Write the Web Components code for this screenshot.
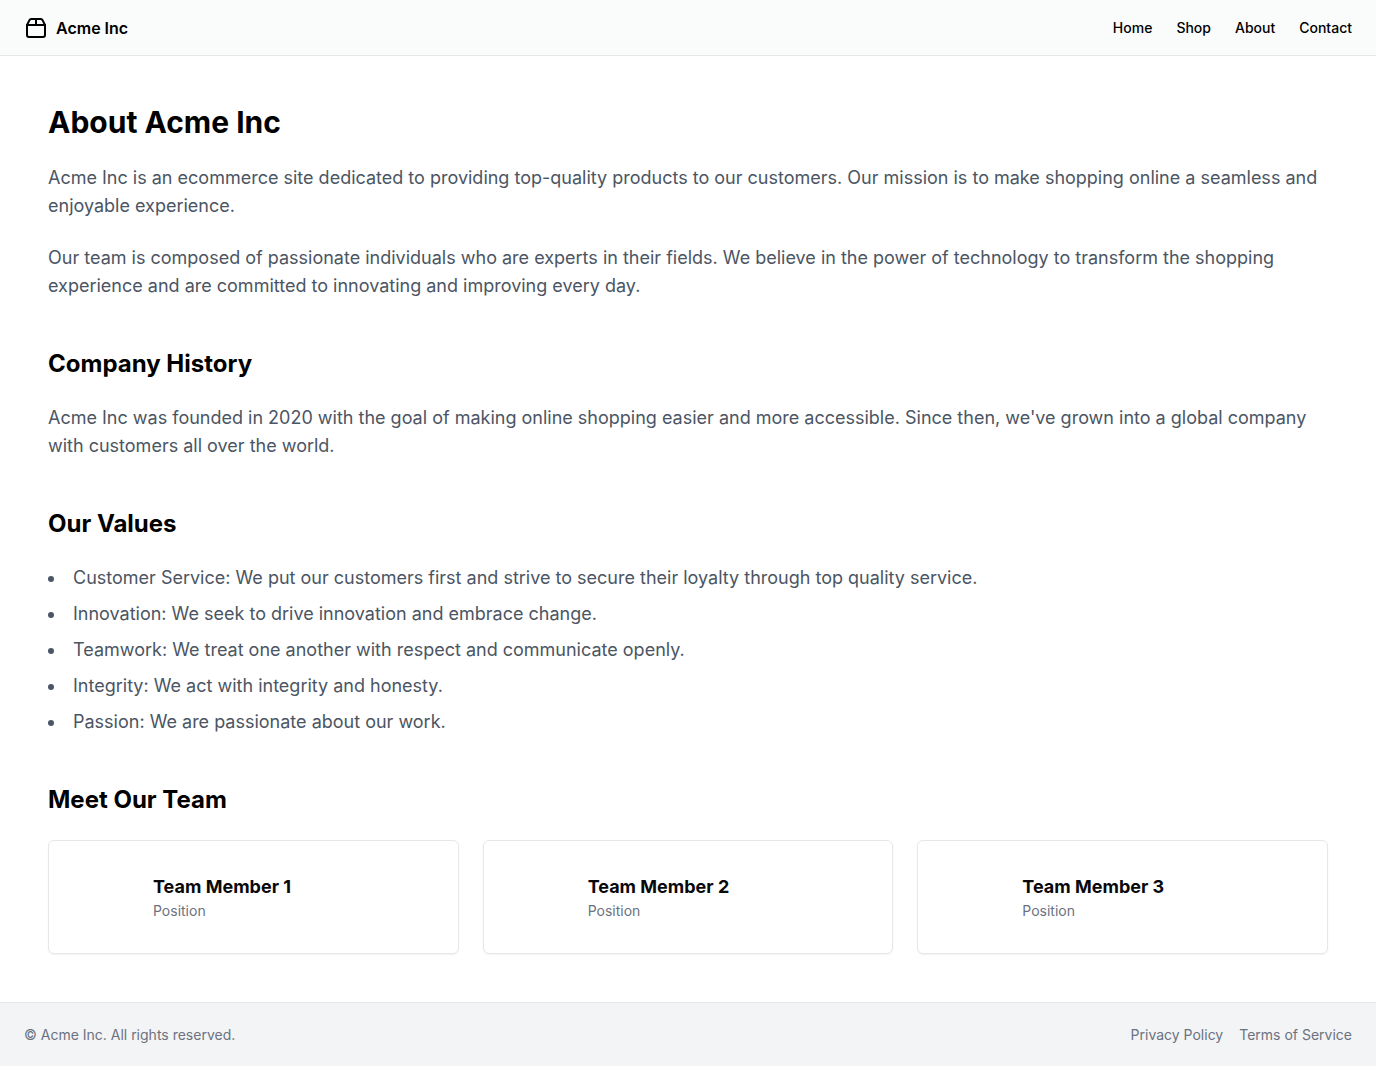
<!DOCTYPE html>
<html lang="en">
<head>
<meta charset="utf-8">
<meta name="viewport" content="width=device-width, initial-scale=1">
<title>About Acme Inc</title>
<style>
  body { margin: 0; background: #fff; color: #000; font-family: Inter, "Liberation Sans", sans-serif; font-size: 16px; line-height: 24px; }
</style>
</head>
<body>
<about-page></about-page>
<script>
function define(name, markup) {
  const template = document.createElement('template');
  template.innerHTML = markup;
  customElements.define(name, class extends HTMLElement {
    constructor() {
      super();
      this.attachShadow({ mode: 'open' }).append(template.content.cloneNode(true));
    }
  });
}

define('nav-link', `
<style>
  :host { display: block; }
  a { display: block; color: inherit; text-decoration: none; }
  a:hover { text-decoration: underline; }
</style>
<a href="#"><slot></slot></a>`);

define('site-header', `
<style>
  :host { display: block; background: #fafcfb; border-bottom: 1px solid #e5e7eb; }
  header { display: flex; align-items: center; height: 55px; padding: 0 24px; }
  .brand { display: flex; align-items: center; gap: 8px; color: inherit; text-decoration: none; font-weight: 600; }
  svg { display: block; width: 24px; height: 24px; }
  nav { display: flex; gap: 24px; margin-left: auto; font-size: 14px; line-height: 20px; font-weight: 500; }
</style>
<header>
  <a class="brand" href="#">
    <svg viewBox="0 0 24 24" fill="none" stroke="currentColor" stroke-width="2" stroke-linecap="round" stroke-linejoin="round" aria-hidden="true">
      <path d="M3 9h18v10a2 2 0 0 1-2 2H5a2 2 0 0 1-2-2V9Z"/>
      <path d="m3 9 2.45-4.9A2 2 0 0 1 7.24 3h9.52a2 2 0 0 1 1.8 1.1L21 9"/>
      <path d="M12 3v6"/>
    </svg>
    <span>Acme Inc</span>
  </a>
  <nav aria-label="Main"><slot></slot></nav>
</header>`);

define('page-section', `
<style>
  :host { display: block; margin-top: 48px; }
  ::slotted(h2) { margin: 0 0 24px; font-size: 24px; line-height: 32px; font-weight: 700; }
</style>
<section><slot name="title"></slot><slot></slot></section>`);

define('body-text', `
<style>
  :host { display: block; color: #4b5563; font-size: 18px; line-height: 28px; }
  :host(:not(:last-child)) { margin-bottom: 24px; }
  p { margin: 0; }
</style>
<p><slot></slot></p>`);

define('value-list', `
<style>
  :host { display: block; color: #4b5563; font-size: 18px; line-height: 28px; }
  ul { display: flex; flex-direction: column; gap: 8px; margin: 0; padding: 0; list-style: disc inside; }
</style>
<ul>
  <li>Customer Service: We put our customers first and strive to secure their loyalty through top quality service.</li>
  <li>Innovation: We seek to drive innovation and embrace change.</li>
  <li>Teamwork: We treat one another with respect and communicate openly.</li>
  <li>Integrity: We act with integrity and honesty.</li>
  <li>Passion: We are passionate about our work.</li>
</ul>`);

define('team-card', `
<style>
  :host { display: block; border: 1px solid #e5e7eb; border-radius: 6px; background: #fff; box-shadow: 0 1px 2px rgba(0,0,0,.05); color: #09090b; }
  article { display: flex; align-items: center; gap: 16px; padding: 24px; }
  .avatar { flex: none; width: 64px; height: 64px; border-radius: 50%; }
  h3 { margin: 0; font-size: 18px; line-height: 28px; font-weight: 700; }
  p { margin: 0; color: #6b7280; font-size: 14px; line-height: 20px; }
</style>
<article>
  <div class="avatar"></div>
  <div><h3><slot></slot></h3><p>Position</p></div>
</article>`);

define('team-grid', `
<style>
  :host { display: grid; grid-template-columns: repeat(3, minmax(0, 1fr)); gap: 24px; }
  @media (max-width: 767px) { :host { grid-template-columns: 1fr; } }
</style>
<slot></slot>`);

define('site-footer', `
<style>
  :host { display: block; background: #f3f4f6; border-top: 1px solid #e5e7eb; color: #6b7280; font-size: 14px; line-height: 20px; }
  footer { display: flex; align-items: center; justify-content: space-between; min-height: 63px; padding: 0 24px; }
  p { margin: 0; }
  nav { display: flex; gap: 16px; }
</style>
<footer>
  <p>© Acme Inc. All rights reserved.</p>
  <nav aria-label="Legal"><slot></slot></nav>
</footer>`);

define('about-page', `
<style>
  :host { display: flex; flex-direction: column; min-height: 100vh; }
  main { flex: 1; padding: 48px; }
  h1 { margin: 0 0 24px; font-size: 30px; line-height: 36px; font-weight: 700; }
</style>
<site-header>
  <nav-link>Home</nav-link><nav-link>Shop</nav-link><nav-link>About</nav-link><nav-link>Contact</nav-link>
</site-header>
<main>
  <h1>About Acme Inc</h1>
  <body-text>Acme Inc is an ecommerce site dedicated to providing top-quality products to our customers. Our mission is to make shopping online a seamless and enjoyable experience.</body-text>
  <body-text>Our team is composed of passionate individuals who are experts in their fields. We believe in the power of technology to transform the shopping experience and are committed to innovating and improving every day.</body-text>
  <page-section>
    <h2 slot="title">Company History</h2>
    <body-text>Acme Inc was founded in 2020 with the goal of making online shopping easier and more accessible. Since then, we've grown into a global company with customers all over the world.</body-text>
  </page-section>
  <page-section>
    <h2 slot="title">Our Values</h2>
    <value-list></value-list>
  </page-section>
  <page-section>
    <h2 slot="title">Meet Our Team</h2>
    <team-grid>
      <team-card>Team Member 1</team-card>
      <team-card>Team Member 2</team-card>
      <team-card>Team Member 3</team-card>
    </team-grid>
  </page-section>
</main>
<site-footer>
  <nav-link>Privacy Policy</nav-link><nav-link>Terms of Service</nav-link>
</site-footer>`);
</script>
</body>
</html>
